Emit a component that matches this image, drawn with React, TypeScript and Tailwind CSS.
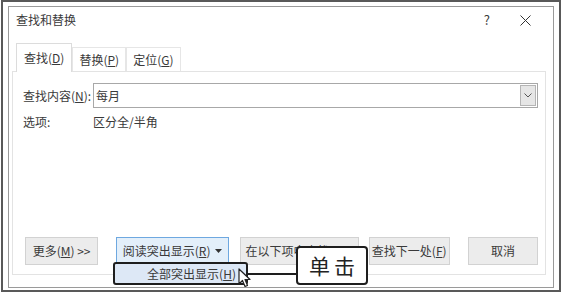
import React from 'react';

const font = { fontFamily: '"Noto Sans CJK SC", "Microsoft YaHei", sans-serif' };

function Btn({ children, className = '' }: { children: React.ReactNode; className?: string }) {
  return (
    <div
      className={
        'flex h-[28px] items-center justify-center border text-[12px] text-[#3a3a3a] ' +
        (className || 'border-[#cfcfcf] bg-[#ececec]')
      }
    >
      {children}
    </div>
  );
}

function Caret() {
  return (
    <svg width="7" height="4" viewBox="0 0 7 4" className="ml-[5px]">
      <path d="M0 0 L7 0 L3.5 4 Z" fill="#333" />
    </svg>
  );
}

function Tab({ label, k, active }: { label: string; k: string; active?: boolean }) {
  return (
    <div
      className={
        active
          ? 'relative z-10 -mb-px flex h-[29px] items-center border border-b-0 border-[#dcdcdc] bg-white px-[7px] text-[12px] text-[#3a3a3a]'
          : 'flex h-[24px] items-center border border-b-0 border-[#e6e6e6] bg-white px-[6px] text-[12px] text-[#3a3a3a]'
      }
    >
      {label}(<span className="underline">{k}</span>)
    </div>
  );
}

function Cursor() {
  return (
    <svg width="14" height="20" viewBox="0 0 14 20" className="absolute left-[235px] top-[266px] z-30">
      <path d="M1 1 L1 16 L4.5 12.5 L7 18.5 L9.5 17.5 L7 11.5 L12 11.5 Z" fill="#fff" stroke="#222" strokeWidth="1.2" strokeLinejoin="round" />
    </svg>
  );
}

export default function App() {
  return (
    <div className="h-[292px] w-[562px] bg-white" style={font}>
      <div className="relative mx-px h-[292px] border-2 border-[#595959] pl-[5px] pt-[4px]">
        {/* dialog */}
        <div className="flex h-[282px] w-[546px] flex-col border border-[#9a9a9a] bg-white">
          <div className="flex h-[26px] items-center pl-[7px] pr-[22px] text-[12px] text-[#3a3a3a]">
            <span>查找和替换</span>
            <span className="ml-auto text-[13px]">?</span>
            <svg width="11" height="11" viewBox="0 0 11 11" className="ml-[30px]">
              <path d="M0.5 0.5 L10.5 10.5 M10.5 0.5 L0.5 10.5" stroke="#333" strokeWidth="1" />
            </svg>
          </div>

          <div className="mt-[10px] flex items-end pl-[7px]">
            <Tab label="查找" k="D" active />
            <Tab label="替换" k="P" />
            <Tab label="定位" k="G" />
          </div>

          <div className="ml-[3px] flex h-[204px] w-[534px] flex-col border border-[#e3e3e3] pl-[10px] pr-[7px]">
            <div className="mt-[11px] flex items-center text-[12px] text-[#3a3a3a]">
              <span className="w-[70px]">
                查找内容(<span className="underline">N</span>):
              </span>
              <div className="flex h-[25px] flex-1 items-center border border-[#a8a8a8] pl-[2px]">
                <span>每月</span>
                <div className="ml-auto mr-px flex h-[21px] w-[16px] items-center justify-center border border-[#b5b5b5] bg-[#e6e6e6]">
                  <svg width="8" height="5" viewBox="0 0 8 5">
                    <path d="M0.5 0.5 L4 4 L7.5 0.5" fill="none" stroke="#555" strokeWidth="1" />
                  </svg>
                </div>
              </div>
            </div>
            <div className="mt-[7px] flex text-[12px] leading-[14px] text-[#3a3a3a]">
              <span className="w-[70px]">选项:</span>
              <span>区分全/半角</span>
            </div>

            <div className="mt-auto mb-[9px] flex pl-[2px]">
              <Btn className="w-[74px] border-[#d2d2d2] bg-[#ececec]">
                更多(<span className="underline">M</span>)&nbsp;&gt;&gt;
              </Btn>
              <Btn className="ml-[18px] w-[114px] border-[#6ea8e0] bg-[#e3effa]">
                阅读突出显示(<span className="underline">R</span>)
                <Caret />
              </Btn>
              <Btn className="ml-[11px] w-[120px] border-[#d2d2d2] bg-[#ececec]">
                在以下项中查找(<span className="underline">I</span>)
                <Caret />
              </Btn>
              <Btn className="ml-[10px] w-[82px] border-[#d2d2d2] bg-[#ececec]">
                查找下一处(<span className="underline">F</span>)
              </Btn>
              <Btn className="ml-[18px] w-[71px] border-[#d2d2d2] bg-[#ececec]">取消</Btn>
            </div>
          </div>
        </div>

        {/* dropdown menu item */}
        <div className="absolute left-[110px] top-[260px] z-20 flex h-[23px] w-[135px] items-center justify-center rounded-[3px] border-2 border-[#1e1e1e] bg-[#dde8f6] pl-[22px] text-[12px] text-[#3a3a3a]">
          全部突出显示(<span className="underline">H</span>)
        </div>
        <Cursor />

        {/* connector + callout */}
        <div className="absolute left-[244px] top-[271px] z-20 h-[2px] w-[50px] bg-[#1e1e1e]" />
        <div className="absolute left-[293px] top-[244px] z-20 flex h-[39px] w-[72px] items-center justify-center rounded-[4px] border-2 border-[#1e1e1e] bg-white text-[21px] tracking-[4px] text-[#222]">
          <span className="pl-[4px]">单击</span>
        </div>
      </div>
    </div>
  );
}
